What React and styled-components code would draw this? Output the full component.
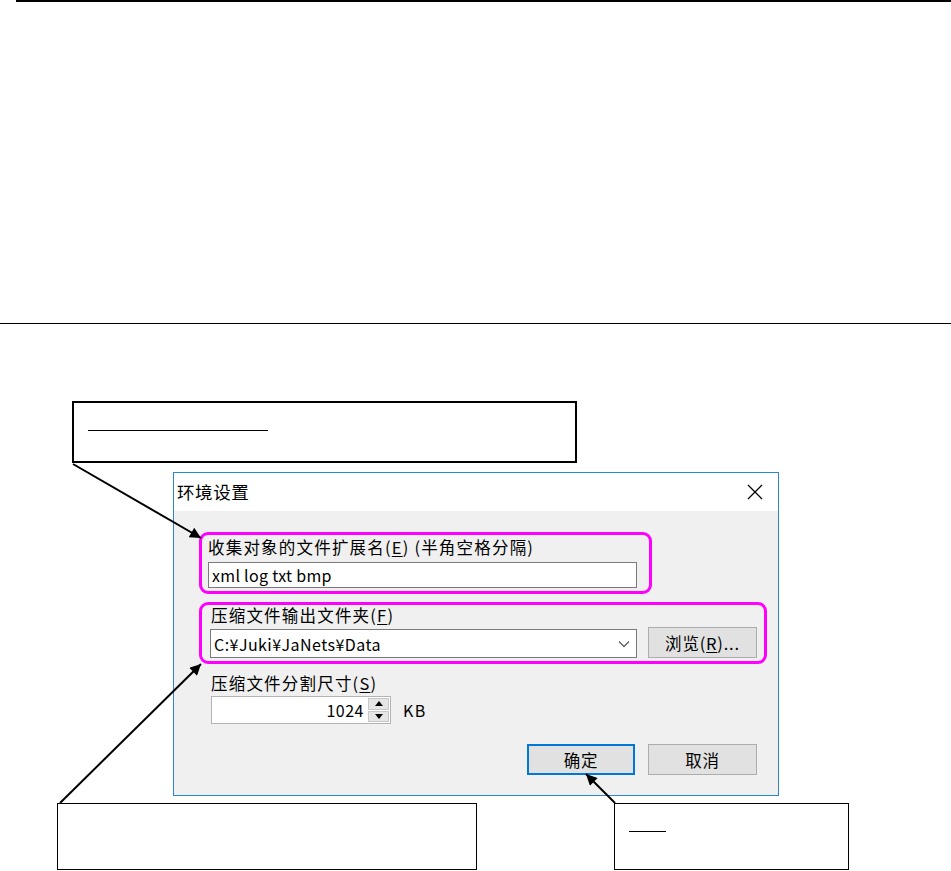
import React from 'react';
import styled, { createGlobalStyle } from 'styled-components';

const GlobalStyle = createGlobalStyle`
  body {
    margin: 0;
    background: #ffffff;
    font-family: "Noto Sans CJK SC", "Noto Sans", sans-serif;
    color: #000;
  }
`;

const Page = styled.div`
  position: relative;
  width: 951px;
  height: 871px;
  overflow: hidden;
`;

const Rule = styled.div`
  border-top: ${p => p.thick}px solid #000;
  margin-left: ${p => p.indent || 0}px;
`;

const Blank = styled.div`
  height: 321px;
`;

const Figure = styled.div`
  display: flex;
  flex-direction: column;
  padding-top: 77px;
`;

const Callout = styled.div`
  box-sizing: border-box;
  width: ${p => p.w}px;
  height: ${p => p.h}px;
  margin-left: ${p => p.left || 0}px;
  border: ${p => p.bw}px solid #000;
  background: #fff;
  padding: 27px 0 0 14px;
`;

const Blankline = styled.div`
  width: ${p => p.w}px;
  border-bottom: 1px solid #000;
`;

const Dialog = styled.div`
  box-sizing: border-box;
  width: 606px;
  height: 324px;
  margin: 9px 0 7px 173px;
  border: 1px solid #2a87d6;
  display: flex;
  flex-direction: column;
  background: #f0f0f0;
`;

const TitleBar = styled.div`
  height: 38px;
  background: #fff;
  display: flex;
  align-items: center;
  justify-content: space-between;
`;

const Title = styled.div`
  font-size: 17.5px;
  line-height: 38px;
  padding-left: 3px;
  letter-spacing: 0.6px;
`;

const CloseBtn = styled.div`
  width: 46px;
  height: 38px;
  display: flex;
  align-items: center;
  justify-content: center;
`;

const Body = styled.div`
  flex: 1;
  display: flex;
  flex-direction: column;
  padding: 21px 21px 0 25px;
`;

const Group = styled.div`
  box-sizing: border-box;
  width: ${p => p.w}px;
  border: 3px solid #ff00ff;
  border-radius: 9px;
  padding: ${p => p.pt}px 0 3px ${p => p.pl}px;
  margin-bottom: ${p => p.mb}px;
`;

const Label = styled.div`
  font-size: 16.5px;
  line-height: 20px;
  height: 20px;
  white-space: nowrap;
  margin-left: ${p => p.indent || 0}px;
  letter-spacing: 1.2px;
  u {
    text-decoration: underline;
    text-underline-offset: 2px;
  }
`;

const TextBox = styled.div`
  box-sizing: border-box;
  width: ${p => p.w}px;
  height: ${p => p.h}px;
  margin-top: ${p => p.mt}px;
  background: #fff;
  border: 1px solid #7a7a7a;
  font-size: 16px;
  line-height: ${p => p.h - 2}px;
  padding-left: 3px;
  letter-spacing: 0.3px;
  white-space: nowrap;
`;

const Row = styled.div`
  display: flex;
  align-items: ${p => p.align || 'center'};
  gap: ${p => p.gap}px;
  margin-top: ${p => p.mt || 0}px;
  margin-left: ${p => p.indent || 0}px;
  justify-content: ${p => p.justify || 'flex-start'};
`;

const Combo = styled.div`
  box-sizing: border-box;
  width: 427px;
  height: 29px;
  background: #fff;
  border: 1px solid #7a7a7a;
  display: flex;
  align-items: center;
  justify-content: space-between;
  padding: 0 6px 0 3px;
  font-size: 16px;
  letter-spacing: 0.45px;
`;

const Button = styled.div`
  box-sizing: border-box;
  width: ${p => p.w}px;
  height: 31px;
  background: #e1e1e1;
  border: ${p => (p.primary ? '2px solid #0078d7' : '1px solid #adadad')};
  display: flex;
  align-items: center;
  justify-content: center;
  font-size: 16.5px;
  letter-spacing: 0.8px;
  white-space: nowrap;
  u {
    text-decoration: underline;
    text-underline-offset: 2px;
  }
`;

const Spin = styled.div`
  box-sizing: border-box;
  width: 180px;
  height: 28px;
  background: #fff;
  border: 1px solid #b4b4b4;
  display: flex;
  align-items: stretch;
`;

const SpinValue = styled.div`
  flex: 1;
  text-align: right;
  font-size: 16px;
  line-height: 26px;
  padding-right: 4px;
  letter-spacing: 0.5px;
`;

const SpinButtons = styled.div`
  width: 21px;
  display: flex;
  flex-direction: column;
  gap: 1px;
  padding: 1px 1px 1px 0;
`;

const SpinHalf = styled.div`
  flex: 1;
  background: #e6e6e6;
  border: 1px solid #c8c8c8;
  display: flex;
  align-items: center;
  justify-content: center;
`;

const Unit = styled.div`
  font-size: 16px;
  letter-spacing: 1.5px;
`;

const BottomRow = styled.div`
  display: flex;
  gap: 137px;
  padding-left: 57px;
`;

const Arrows = styled.svg`
  position: absolute;
  left: 0;
  top: 0;
  pointer-events: none;
`;

function Tri({ up }) {
  return (
    <svg width="8" height="5" viewBox="0 0 8 5">
      <path d={up ? 'M0 5 L4 0 L8 5 Z' : 'M0 0 L8 0 L4 5 Z'} fill="#000" />
    </svg>
  );
}

function App() {
  return (
    <Page>
      <GlobalStyle />
      <Rule thick={2} indent={16} />
      <Blank />
      <Rule thick={1} />
      <Figure>
        <Callout w={505} h={62} left={72} bw={2}>
          <Blankline w={180} />
        </Callout>

        <Dialog>
          <TitleBar>
            <Title>环境设置</Title>
            <CloseBtn>
              <svg width="16" height="16" viewBox="0 0 16 16">
                <path d="M1 1 L15 15 M15 1 L1 15" stroke="#000" strokeWidth="1.3" />
              </svg>
            </CloseBtn>
          </TitleBar>
          <Body>
            <Group w={453} pt={2} pl={6} mb={8}>
              <Label>收集对象的文件扩展名(<u>E</u>) (半角空格分隔)</Label>
              <TextBox w={429} h={26} mt={5}>xml log txt bmp</TextBox>
            </Group>
            <Group w={568} pt={0} pl={8} mb={9}>
              <Label indent={1}>压缩文件输出文件夹(<u>F</u>)</Label>
              <Row align="flex-end" gap={11} mt={2}>
                <Combo>
                  <span>C:¥Juki¥JaNets¥Data</span>
                  <svg width="12" height="8" viewBox="0 0 12 8">
                    <path d="M1 1.5 L6 6.5 L11 1.5" stroke="#606060" strokeWidth="1.3" fill="none" />
                  </svg>
                </Combo>
                <Button w={109}>浏览(<u>R</u>)...</Button>
              </Row>
            </Group>
            <Label indent={12}>压缩文件分割尺寸(<u>S</u>)</Label>
            <Row gap={12} mt={3} indent={12}>
              <Spin>
                <SpinValue>1024</SpinValue>
                <SpinButtons>
                  <SpinHalf><Tri up /></SpinHalf>
                  <SpinHalf><Tri /></SpinHalf>
                </SpinButtons>
              </Spin>
              <Unit>KB</Unit>
            </Row>
            <Row gap={13} mt={20} justify="flex-end">
              <Button w={108} primary>确定</Button>
              <Button w={109}>取消</Button>
            </Row>
          </Body>
        </Dialog>

        <BottomRow>
          <Callout w={420} h={67} bw={1} />
          <Callout w={235} h={67} bw={1}>
            <Blankline w={37} />
          </Callout>
        </BottomRow>
      </Figure>

      <Arrows width="951" height="871" viewBox="0 0 951 871">
        <defs>
          <marker id="head" viewBox="0 0 10 10" refX="10" refY="5"
            markerWidth="15" markerHeight="11" markerUnits="userSpaceOnUse" orient="auto">
            <path d="M0 0 L10 5 L0 10 Z" fill="#000" />
          </marker>
        </defs>
        <line x1="73" y1="464" x2="201" y2="538" stroke="#000" strokeWidth="2" markerEnd="url(#head)" />
        <line x1="60" y1="803" x2="201" y2="664" stroke="#000" strokeWidth="2" markerEnd="url(#head)" />
        <line x1="615" y1="803" x2="586" y2="774" stroke="#000" strokeWidth="2" markerEnd="url(#head)" />
      </Arrows>
    </Page>
  );
}

export default App;
